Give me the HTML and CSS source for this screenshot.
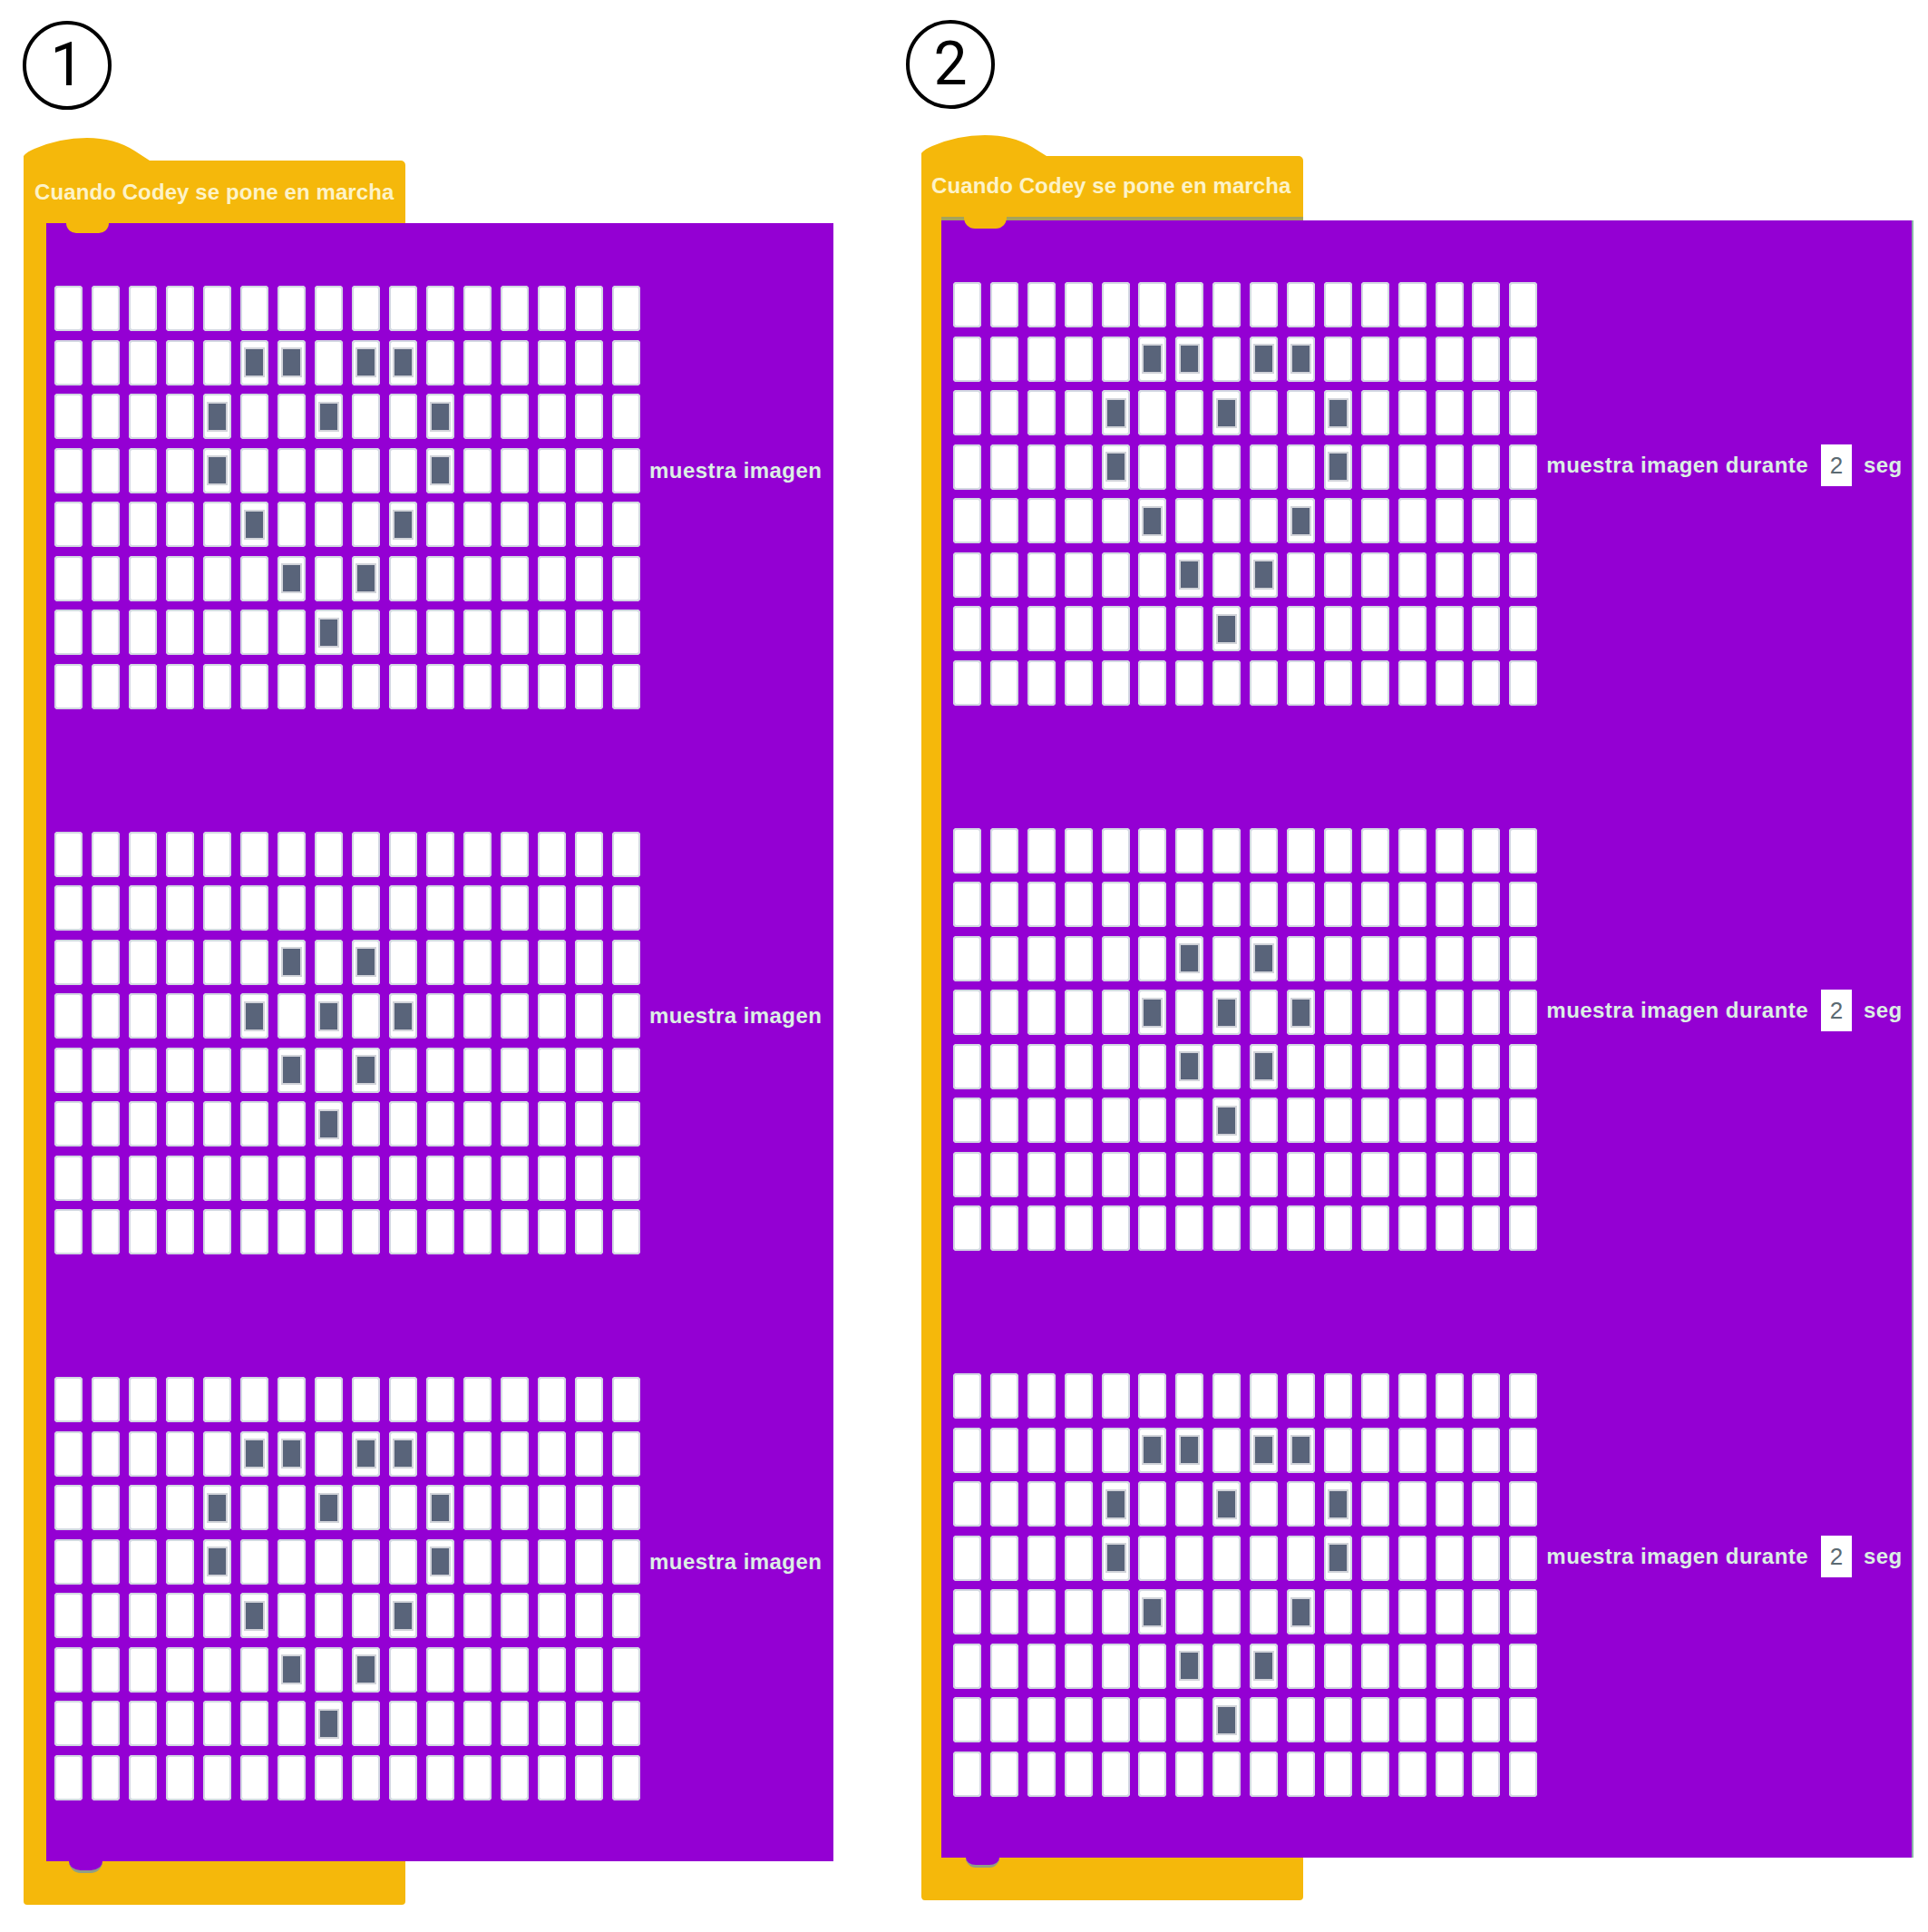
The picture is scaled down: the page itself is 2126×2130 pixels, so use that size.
FILE: index.html
```html
<!DOCTYPE html>
<html lang="es">

<head>
    <meta charset="UTF-8">
    <title>Cuando Codey se pone en marcha</title>
    <link rel="stylesheet" href="styles.css">
</head>

<body>
    <main class="page">
        <section class="panel panel-one">
            <div class="step">1</div>
            <svg class="bump" viewBox="0 0 421 25"><path d="M0 25V20Q4 15 12 12Q40 0 70 0Q100 0 122 14L139 25Z" /></svg>
            <div class="hat"><span>Cuando Codey se pone en marcha</span><i class="tab"></i></div>
            <div class="stack">
                <div class="row">
                    <div class="matrix" data-face="big"></div>
                    <div class="side"><span class="label">muestra imagen</span></div>
                </div>
                <div class="row">
                    <div class="matrix" data-face="small"></div>
                    <div class="side"><span class="label">muestra imagen</span></div>
                </div>
                <div class="row">
                    <div class="matrix" data-face="big"></div>
                    <div class="side"><span class="label">muestra imagen</span></div>
                </div>
                <i class="notch"></i>
            </div>
            <div class="foot"></div>
        </section>

        <section class="panel panel-two">
            <div class="step">2</div>
            <svg class="bump" viewBox="0 0 421 23"><path d="M0 23V20Q4 15 12 12Q40 0 70 0Q100 0 122 13L138 23Z" /></svg>
            <div class="hat"><span>Cuando Codey se pone en marcha</span><i class="tab"></i></div>
            <div class="stack">
                <div class="row">
                    <div class="matrix" data-face="big"></div>
                    <div class="side">
                        <span class="label">muestra imagen durante</span>
                        <span class="value">2</span>
                        <span class="label">seg</span>
                    </div>
                </div>
                <div class="row">
                    <div class="matrix" data-face="small"></div>
                    <div class="side">
                        <span class="label">muestra imagen durante</span>
                        <span class="value">2</span>
                        <span class="label">seg</span>
                    </div>
                </div>
                <div class="row">
                    <div class="matrix" data-face="big"></div>
                    <div class="side">
                        <span class="label">muestra imagen durante</span>
                        <span class="value">2</span>
                        <span class="label">seg</span>
                    </div>
                </div>
                <i class="notch"></i>
            </div>
            <div class="foot"></div>
        </section>
    </main>

    <script src="faces.js"></script>
</body>

</html>
```

FILE: styles.css
```css
body {
    margin: 0;
    font-family: "Liberation Sans", Arial, sans-serif;
    background-color: #fff;
}

.page {
    display: flex;
    align-items: flex-start;
    padding-left: 26px;
}

.panel {
    display: flex;
    flex-direction: column;
}

.panel-one {
    width: 893px;
    padding-top: 23px;
}

.panel-two {
    width: 1094px;
    margin-left: 97px;
    padding-top: 22px;
}

.step {
    box-sizing: border-box;
    width: 98px;
    height: 98px;
    border: 4px solid #000;
    border-radius: 50%;
    display: flex;
    align-items: center;
    justify-content: center;
    font-family: Roboto, sans-serif;
    font-size: 66px;
    line-height: 1;
    color: #000;
}

.panel-one .step {
    margin-left: -1px;
    margin-bottom: 31px;
}

.panel-two .step {
    margin-left: -17px;
    margin-bottom: 29px;
}

.bump {
    display: block;
    width: 421px;
    fill: #f5b80b;
}

.panel-one .bump {
    height: 25px;
}

.panel-two .bump {
    height: 23px;
}

.hat {
    position: relative;
    box-sizing: border-box;
    width: 421px;
    height: 69px;
    padding: 17px 0 0 12px;
    background-color: #f5b80b;
    border-radius: 0 5px 0 0;
    font-size: 24px;
    font-weight: bold;
    line-height: 36px;
    letter-spacing: 0.1px;
    color: #fdf3c8;
    white-space: nowrap;
}

.panel-two .hat {
    height: 71px;
    padding-top: 15px;
    padding-left: 11px;
}

.panel-two .hat::after {
    content: "";
    position: absolute;
    left: 22px;
    right: 0;
    bottom: 0;
    height: 4px;
    background-color: #a5a25e;
}

.tab {
    position: absolute;
    z-index: 1;
    left: 47px;
    top: 100%;
    width: 47px;
    height: 11px;
    background-color: #f5b80b;
    border-radius: 0 0 12px 12px;
}

.panel-two .tab {
    top: calc(100% - 4px);
    height: 13px;
}

.stack {
    position: relative;
    display: flex;
    flex-direction: column;
    gap: 135px;
    padding: 69px 0 67px 9px;
    border-left: 25px solid #f5b80b;
    background-color: #9400d3;
}

.panel-two .stack {
    padding: 68px 0 67px 13px;
    border-left-width: 22px;
    border-right: 2px solid #8ab3a8;
}

.notch {
    position: absolute;
    left: 25px;
    bottom: -13px;
    width: 37px;
    height: 13px;
    background-color: #9400d3;
    border-bottom: 3px solid #8f9f85;
    border-radius: 0 0 14px 14px;
    box-sizing: border-box;
}

.panel-two .notch {
    left: 27px;
    bottom: -11px;
    height: 11px;
}

.row {
    display: flex;
    align-items: flex-start;
}

.matrix {
    display: grid;
    grid-template-columns: repeat(16, 31px);
    grid-auto-rows: 50px;
    column-gap: 9.9px;
    row-gap: 9.5px;
}

.panel-one .matrix {
    column-gap: 10px;
}

.cell {
    display: flex;
    align-items: center;
    justify-content: center;
    background-color: #fff;
    border-radius: 4px;
    box-shadow: inset 0 0 0 2px #d3d8e2;
}

.cell.on::after {
    content: "";
    width: 19px;
    height: 29px;
    background-color: #59647a;
    outline: 2px solid #d2d4da;
}

/* the text sits level with the fourth row of the matrix */
.side {
    display: flex;
    align-items: center;
    height: 50px;
    margin: 178.5px 0 0 10px;
}

.panel-two .side {
    margin-top: 176.5px;
}

.label {
    font-size: 24px;
    font-weight: bold;
    line-height: 30px;
    letter-spacing: 0.45px;
    color: #dcefe4;
    white-space: nowrap;
}

.value {
    width: 34px;
    height: 46px;
    margin: 0 13px 0 14px;
    background-color: #fff;
    color: #5b6a72;
    font-size: 26px;
    line-height: 46px;
    text-align: center;
}

.foot {
    width: 421px;
    height: 48px;
    background-color: #f5b80b;
    border-radius: 0 0 4px 4px;
}

.panel-two .foot {
    height: 47px;
}
```

FILE: faces.js
```js
// columns that are lit, row by row
const faces = {
    big: [[], [5, 6, 8, 9], [4, 7, 10], [4, 10], [5, 9], [6, 8], [7], []],
    small: [[], [], [6, 8], [5, 7, 9], [6, 8], [7], [], []]
};

document.querySelectorAll('.matrix').forEach(matrix => {
    faces[matrix.dataset.face].forEach(lit => {
        for (let col = 0; col < 16; col++) {
            const cell = document.createElement('div');
            cell.className = lit.includes(col) ? 'cell on' : 'cell';
            matrix.appendChild(cell);
        }
    });
});
```
